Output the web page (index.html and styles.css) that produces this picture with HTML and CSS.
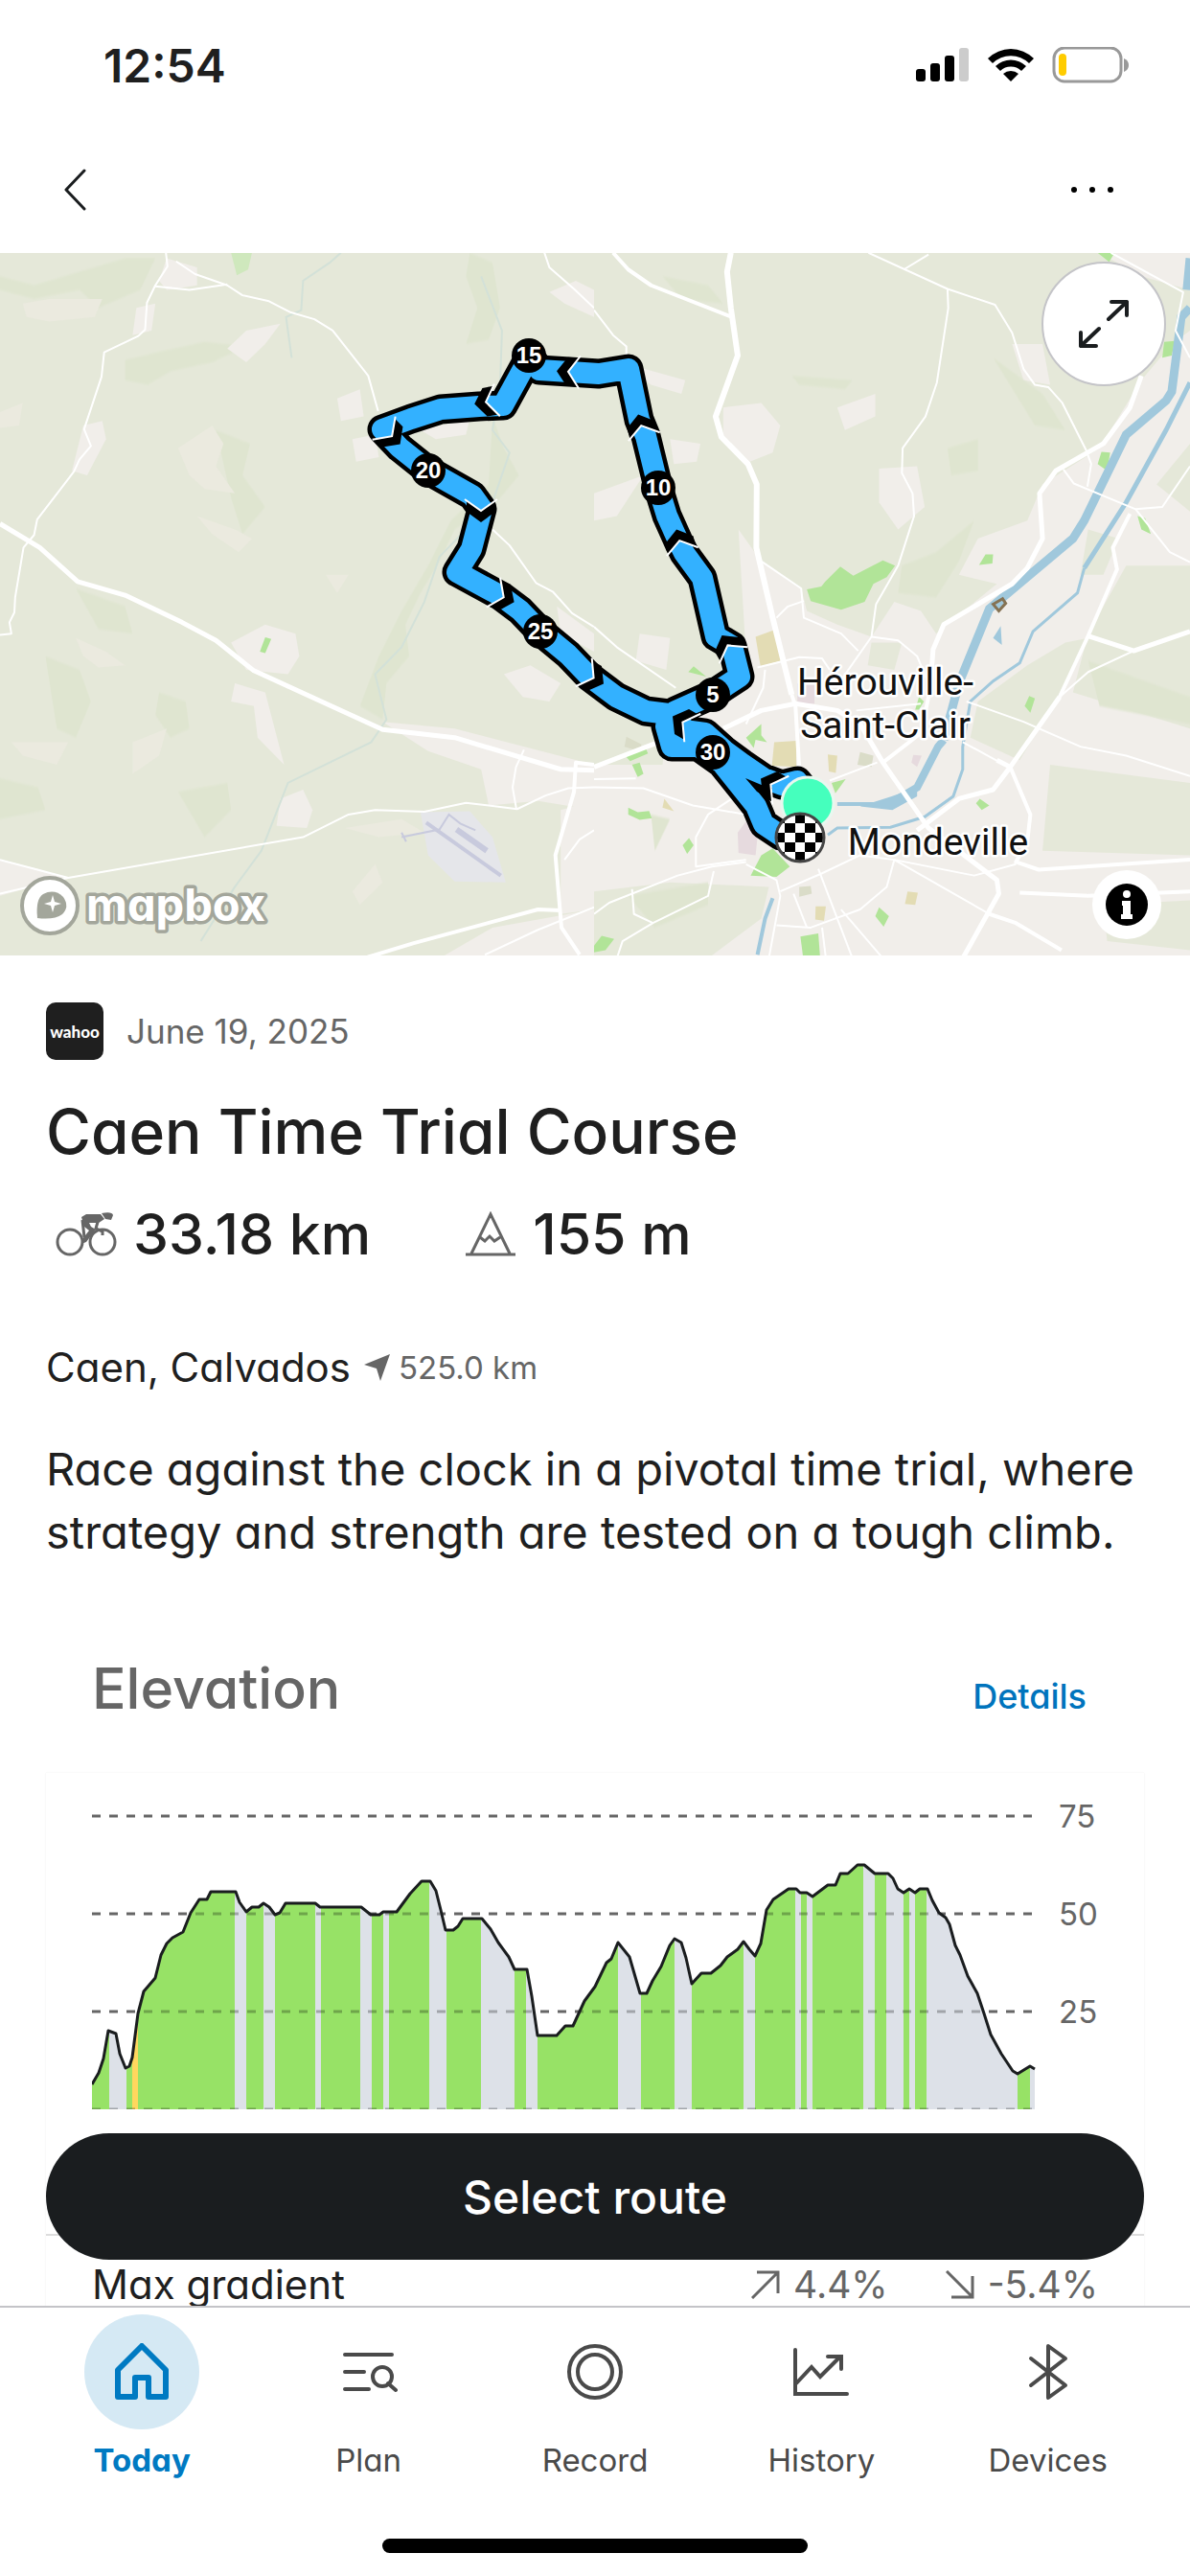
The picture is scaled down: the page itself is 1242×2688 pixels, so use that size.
FILE: index.html
```html
<!DOCTYPE html>
<html lang="en">
  <head>
    <meta charset="UTF-8" />
    <meta name="viewport" content="width=device-width, initial-scale=1.0" />
    <title>Caen Time Trial Course</title>
    <link rel="stylesheet" href="styles.css">
  </head>
  <body>
    <div class="app">
      <div class="statusBar">
        <span class="time">12:54</span>
        <svg class="statusIcons" viewBox="0 0 222 38" width="222" height="38" aria-hidden="true">
          <rect x="0" y="23" width="10" height="13" rx="3" />
          <rect x="15" y="17" width="10" height="19" rx="3" />
          <rect x="30" y="9" width="10" height="27" rx="3" />
          <rect x="45" y="1" width="10" height="35" rx="3" fill="#ccc" />
          <path d="M75 12 A34 34 0 0 1 123 12 L118 17 A27 27 0 0 0 80 17Z" />
          <path d="M83 20 A23 23 0 0 1 115 20 L110 25 A16 16 0 0 0 88 25Z" />
          <path d="M91 28 A12 12 0 0 1 107 28 L99 36Z" />
          <rect x="144" y="1" width="70" height="35" rx="11" fill="none" stroke="#999" stroke-width="3" />
          <rect x="149" y="7" width="8" height="23" rx="4" fill="#fc0" />
          <path d="M217 12 Q222 14 222 19 Q222 24 217 26Z" fill="#999" />
        </svg>
      </div>

      <div class="navBar">
        <button class="iconBtn" aria-label="Back">
          <svg viewBox="0 0 24 44" width="24" height="44"><path d="M21 2 L2 22 L21 42" fill="none" stroke="#1a1d1f" stroke-width="3" stroke-linecap="round" stroke-linejoin="round" /></svg>
        </button>
        <button class="iconBtn" aria-label="More">
          <svg viewBox="0 0 46 8" width="46" height="8"><circle cx="4" cy="4" r="3" /><circle cx="23" cy="4" r="3" /><circle cx="42" cy="4" r="3" /></svg>
        </button>
      </div>

      <div class="content">
        <div class="map">
          <svg class="mapArt" viewBox="0 0 1242 733" role="img" aria-label="Route map">
            <defs>
              <g id="arrow">
                <path d="M-15 8 V-4 L0 -15 L15 -4 V8 L0 -3Z" fill="#000" />
                <path d="M-17 9 L0 -3 L17 9" fill="none" stroke="#fff" stroke-width="2" />
              </g>
              <path id="track" d="M844 830 L832 815 L816 819 L797 812 L775 797 L756 783 L736 765 L714 762 L705 742 L743 725 L772 706 L764 674 L747 664 L733 603 L714 577 L709 567 L696 538 L688 512 L674 455 L667 438 L656 385 L625 390 L563 386 L553 372 L525 423 L500 424 L460 427 L429 437 L399 448 L417 467 L447 491 L493 517 L503 531 L492 573 L477 597 L523 622 L543 637 L564 659 L593 683 L615 706 L643 727 L674 742 L698 745 L695 758 L701 779 L729 779 L753 796 L789 841 L797 860 L815 872 L834 874" />
              <clipPath id="finishClip"><circle cx="835" cy="610" r="24" /></clipPath>
              <filter id="soft"><feGaussianBlur stdDeviation="2" /></filter>
            </defs>
            <rect width="1242" height="733" fill="#e5e8d9" />

            <!-- west side -->
            <svg x="0" y="-4" width="620" height="740" viewBox="0 0 1568 1568" preserveAspectRatio="none">
              <g fill="#dfe5d0" filter="url(#soft)">
                <path d="M0 60 L90 80 L210 50 L330 20 L410 20 L370 90 L260 130 L210 90 L90 110 L0 90Z" />
                <path d="M330 245 L430 225 L540 205 L650 215 L560 250 L450 270 L390 300 L330 290Z" />
                <path d="M1240 8 L1300 30 L1320 130 L1290 200 L1230 210 L1260 130 L1230 60Z" />
                <path d="M1300 370 L1330 440 L1370 500 L1310 560 L1200 620 L1160 690 L1110 760 L1070 830 L1080 900 L1020 960 L1010 1040 L950 1010 L1000 900 L1060 800 L1130 700 L1190 600 L1290 520Z" />
                <path d="M570 400 L660 430 L640 500 L700 570 L640 630 L610 550Z" />
                <path d="M120 900 L210 930 L240 1000 L200 1080 L150 1060Z" />
                <path d="M420 980 L490 1000 L500 1060 L450 1080 L410 1030Z" />
                <path d="M0 1170 L100 1190 L120 1240 L0 1260Z" />
                <path d="M470 1200 L600 1180 L610 1240 L540 1300Z" />
                <path d="M200 750 L330 790 L350 850 L260 840Z" />
              </g>
              <g fill="#ebeadf">
                <path d="M60 120 L130 110 L270 110 L250 150 L130 160 L70 150Z" />
                <path d="M470 440 L560 390 L590 430 L570 480 L620 540 L540 530 L500 500Z" />
                <path d="M520 590 L620 620 L665 640 L630 670 L560 630Z" />
                <path d="M0 360 L60 340 L50 390 L0 395Z" />
                <path d="M200 860 L280 890 L330 920 L260 925 L220 900Z" />
                <path d="M30 1090 L180 1090 L150 1140 L60 1120Z" />
                <path d="M350 1090 L440 1060 L420 1120 L350 1160Z" />
                <path d="M860 720 L920 720 L890 760Z" />
                <path d="M910 1280 L1060 1260 L1120 1290 L1000 1300Z" />
                <path d="M930 1420 L990 1360 L1010 1400 L950 1450Z" />
              </g>
              <g fill="#f1eeea">
                <path d="M440 20 L520 40 L520 80 L440 90 L420 70Z" />
                <path d="M360 130 L410 120 L400 180 L350 190Z" />
                <path d="M600 220 L650 180 L740 165 L700 210 L650 250Z" />
                <path d="M220 390 L270 380 L280 420 L230 500 L190 490Z" />
                <path d="M1450 95 L1520 70 L1568 90 V150 L1490 120Z" />
                <path d="M890 330 L950 310 L960 370 L900 380Z" />
                <path d="M930 420 L990 410 L1000 460 L940 470Z" />
                <path d="M1110 400 L1240 375 L1230 410 L1150 420Z" />
                <path d="M610 870 L700 830 L780 850 L790 900 L760 940 L650 930Z" />
                <path d="M620 960 L700 980 L750 1140 L680 1080 L670 1010 L610 1000Z" />
                <path d="M1470 790 L1568 850 V890 L1480 850Z" />
                <path d="M1330 940 L1400 920 L1480 960 L1450 1000 L1380 990Z" />
                <path d="M1010 1045 L1200 1060 L1568 1140 V1240 L1420 1220 L1290 1230 L1270 1150 L1130 1110Z" />
                <path d="M740 1215 L800 1195 L825 1240 L810 1280 L730 1275Z" />
                <path d="M0 1350 L100 1370 L170 1390 L0 1430Z" />
                <path d="M1160 1568 L1300 1500 L1568 1460 V1568Z" />
                <path d="M1480 1240 L1568 1220 V1460 L1480 1470Z" />
              </g>
              <path d="M610 8 H665 L655 45 L625 58Z" fill="#cfe8bd" />
              <path d="M700 858 L716 862 L700 893 L686 890Z" fill="#b1e498" />
              <g fill="none" stroke="#d3e1d8" stroke-width="2">
                <path vector-effect="non-scaling-stroke" d="M900 8 L870 30 L800 70 L795 135 L755 150 L770 240" />
                <path vector-effect="non-scaling-stroke" d="M1270 60 L1325 180 L1320 300 L1300 400 L1345 450 L1300 560 L1160 680 L1120 780 L1060 880 L990 940 L1020 1040 L980 1090 L760 1180 L690 1330 L620 1410 L530 1530" />
              </g>
              <path d="M1110 1245 L1240 1243 L1300 1300 L1335 1400 L1200 1398 L1130 1340Z" fill="#e5e6ea" />
              <g fill="none" stroke="#c8cadd" stroke-width="4">
                <path vector-effect="non-scaling-stroke" d="M1125 1268 L1322 1385" />
                <path vector-effect="non-scaling-stroke" d="M1205 1283 L1285 1330" stroke-width="6" />
                <path vector-effect="non-scaling-stroke" d="M1060 1300 L1160 1283 L1185 1250 L1215 1270 L1255 1285 M1060 1290 L1072 1310" stroke-width="2" />
              </g>
              <g fill="none" stroke="#fff" stroke-width="2" stroke-linejoin="round">
                <path vector-effect="non-scaling-stroke" d="M438 8 L442 38 L410 80 L388 118 L383 178 L365 192 L275 228 L268 282 L222 398 L240 435 L210 465 L195 492 L98 598 L90 632 L62 660 L40 770 L38 803 L25 825 L30 850 L0 853" />
                <path vector-effect="non-scaling-stroke" d="M465 27 L515 55 L600 80 L640 102 L710 115 L768 140 L830 155 L878 180 L972 280 L998 358" />
                <path vector-effect="non-scaling-stroke" d="M410 82 L500 90 L600 78" />
                <path vector-effect="non-scaling-stroke" d="M1437 8 L1450 40 L1515 88 L1568 130" />
                <path vector-effect="non-scaling-stroke" d="M1300 620 L1345 655 L1415 738 L1460 758 L1510 805 L1568 835" />
                <path vector-effect="non-scaling-stroke" d="M0 1350 L180 1390 L800 1300 L920 1250 L990 1240 L1120 1244 L1230 1224 L1365 1238 L1440 1208 L1500 1192 L1568 1190" />
                <path vector-effect="non-scaling-stroke" d="M1383 1107 L1362 1145 L1353 1190 L1363 1238" />
                <path vector-effect="non-scaling-stroke" d="M0 1425 L180 1390" />
                <path vector-effect="non-scaling-stroke" d="M1280 1560 L1420 1505 L1568 1455" />
                <path vector-effect="non-scaling-stroke" d="M1490 1350 L1530 1305 L1568 1285" />
                <path vector-effect="non-scaling-stroke" stroke-width="5" d="M0 607 L105 660 L205 735 L330 765 L480 825 L570 865 L670 932 L1010 1062 L1200 1080 L1480 1150 L1568 1152" />
                <path vector-effect="non-scaling-stroke" stroke-width="4" d="M960 1568 L1090 1535 L1420 1460 L1480 1462 M1568 1140 L1520 1135 L1515 1200 L1466 1340 L1482 1500 L1530 1560" />
              </g>
            </svg>

            <!-- east side -->
            <svg x="620" y="-4" width="622" height="740" viewBox="0 0 1568 1568" preserveAspectRatio="none">
              <path fill="#f1eeea" d="M380 620 L440 690 L545 750 L560 800 L640 830 L730 857 L790 780 L860 800 L900 850 L1060 740 L960 720 L1010 640 L1140 600 L1180 520 L1330 440 L1440 290 L1520 210 L1568 180 V430 L1480 520 L1568 580 V700 L1400 700 L1300 850 L1260 980 L1568 1060 V1568 H0 V1140 L180 1140 L200 1010 L330 960 L400 900Z" />
              <g fill="#f1eeea">
                <path d="M340 350 L440 340 L490 390 L470 450 L410 470 L340 410Z" />
                <path d="M200 420 L280 430 L270 470 L210 475Z" />
                <path d="M640 350 L740 320 L740 370 L660 400Z" />
                <path d="M750 485 L850 480 L870 570 L800 620 L750 560Z" />
                <path d="M0 540 L130 500 L60 590 L0 600Z" />
                <path d="M70 250 L240 290 L230 320 L150 300Z" />
                <path d="M1330 8 H1568 V90 L1440 60Z" />
                <path d="M1100 210 L1180 210 L1200 300 L1130 290Z" />
                <path d="M120 850 L200 860 L190 930 L110 910Z" />
              </g>
              <g fill="#e5e8d9">
                <path d="M1300 620 L1380 640 L1340 720 L1280 720Z" />
                <path d="M1240 870 L1300 860 L1220 990 L1120 1130 L990 1080 L1010 1000 L1140 920Z" />
                <path d="M1200 1140 L1568 1180 V1340 L1180 1330Z" />
                <path d="M1340 1450 L1568 1440 V1550 L1350 1530Z" />
                <path d="M0 1420 L200 1400 L460 1410 L440 1480 L300 1568 H0Z" />
                <path d="M730 870 L810 870 L790 930 L720 920Z" />
              </g>
              <g fill="#dfe5d0" filter="url(#soft)">
                <path d="M810 700 L900 670 L1000 600 L960 690 L900 770 L800 760Z" />
                <path d="M930 440 L1010 420 L1010 490 L940 500Z" />
                <path d="M180 60 L300 80 L340 120 L230 110Z" />
                <path d="M520 280 L680 290 L660 310 L540 300Z" />
                <path d="M1050 240 L1180 320 L1240 400 L1160 390Z" />
                <path d="M1300 910 L1500 970 L1568 990 V1050 L1330 1010Z" />
                <path d="M150 1250 L200 1260 L160 1330Z" />
                <path d="M90 1430 L300 1400 L300 1450 L160 1500Z" />
              </g>
              <g fill="#b1e498">
                <path d="M560 752 L598 746 L608 735 L648 702 L682 722 L760 688 L792 700 L770 725 L735 740 L712 780 L650 797 L570 778Z" />
                <path d="M1013 698 L1030 675 L1050 675 L1048 695Z" />
                <path d="M1325 475 L1335 448 L1358 450 L1350 490Z" />
                <path d="M1325 8 H1370 L1355 28Z" />
                <path d="M1500 205 L1528 203 L1520 235 L1495 240Z" />
                <path d="M1430 590 L1450 595 L1465 630 L1440 620Z" />
                <path d="M248 935 L262 922 L295 945Z" />
                <path d="M400 1080 L440 1050 L440 1075 L455 1090 L425 1085 L420 1103Z" />
                <path d="M80 1118 L135 1102 L142 1115 L95 1132Z M100 1140 L120 1135 L130 1160 L115 1167Z" />
                <path d="M90 1235 L115 1245 L145 1242 L152 1258 L120 1262 L90 1250Z" />
                <path d="M233 1318 L250 1302 L262 1318 L245 1337Z" />
                <path d="M412 1385 L440 1340 L470 1325 L515 1365 L480 1388Z" />
                <path d="M543 1520 L590 1513 L595 1568 L550 1565Z" />
                <path d="M740 1475 L750 1455 L776 1475 L762 1498Z" />
                <path d="M1005 1225 L1015 1215 L1040 1230 L1020 1240Z" />
                <path d="M1133 1010 L1145 988 L1160 993 L1148 1025Z" />
                <path d="M845 1018 L855 990 L868 1000 L855 1018Z" />
                <path d="M625 1180 L662 1172 L635 1203Z" />
                <path d="M0 1540 L20 1518 L53 1525 L30 1550 L0 1555Z" />
              </g>
              <g fill="#e3dcb4">
                <path d="M425 857 L480 840 L492 910 L438 922Z" />
                <path d="M474 1090 L532 1087 L532 1145 L468 1142Z" />
                <path d="M615 1117 L640 1120 L636 1158 L618 1155Z" />
                <path d="M825 1420 L852 1423 L845 1450 L818 1448Z" />
                <path d="M583 1453 L610 1453 L605 1485 L582 1482Z" />
                <path d="M185 1215 L210 1243 L180 1235Z" />
              </g>
              <g fill="#dadcc8">
                <path d="M700 1112 L735 1120 L730 1145 L693 1140Z" />
                <path d="M540 1410 L570 1408 L573 1425 L540 1432Z" />
                <path d="M85 1078 L125 1095 L120 1110 L80 1100Z" />
              </g>
              <g fill="#e6dade">
                <path d="M378 1290 L400 1265 L430 1300 L425 1340 L380 1335Z" />
                <path d="M535 960 H580 V1005 H535Z" />
                <path d="M840 1118 L862 1120 L850 1145 L835 1135Z" />
              </g>
              <g fill="none" stroke="#a0c8dc">
                <path vector-effect="non-scaling-stroke" stroke-width="9" d="M1568 20 L1560 90 M1568 130 L1545 150 L1520 315 L1505 335 L1400 410 L1290 600 L1260 640 L1040 795 L960 960 L920 1085" />
                <path vector-effect="non-scaling-stroke" stroke-width="8" d="M920 1085 L905 1100 L850 1190 L820 1205 L780 1225" />
                <path vector-effect="non-scaling-stroke" stroke-width="4" d="M790 1227 L640 1227 M470 1435 L450 1480 L430 1560" />
                <path vector-effect="non-scaling-stroke" stroke-width="5" d="M1568 295 L1505 400 L1400 560 L1290 705" />
                <path vector-effect="non-scaling-stroke" stroke-width="3" d="M1290 705 L1272 760 L1155 845 L1120 915 L1050 955 L990 1000 L970 1100 L970 1150 L945 1210 L870 1255 L780 1278 L640 1280 L615 1295" />
              </g>
              <path d="M783 1210 L850 1190 L850 1210 L785 1240 L700 1232Z M1050 860 L1070 833 L1073 875Z" fill="#a0c8dc" />
              <g fill="none" stroke="#fff" stroke-width="2" stroke-linejoin="round">
                <path vector-effect="non-scaling-stroke" d="M722 8 L930 88 L1055 123 L1100 185 L1130 265 L1160 300 L1195 305 L1232 340 L1295 445 L1308 475 L1298 525" />
                <path vector-effect="non-scaling-stroke" d="M930 88 L932 130 L902 295 L872 370 L812 440 L810 495 L838 540 L842 590 L800 700 L742 785 L730 857 L640 965" />
                <path vector-effect="non-scaling-stroke" d="M815 45 L880 12 M1360 8 L1550 95 L1530 180 L1568 240" />
                <path vector-effect="non-scaling-stroke" d="M0 135 L50 190 L85 215 V240" />
                <path vector-effect="non-scaling-stroke" d="M0 835 L60 880 L215 970" />
                <path vector-effect="non-scaling-stroke" d="M440 690 L545 750 L552 815 L650 850 L695 888" />
                <path vector-effect="non-scaling-stroke" d="M480 815 L510 790 L552 778" />
                <path vector-effect="non-scaling-stroke" d="M730 857 L800 865 L850 900 L875 950" />
                <path vector-effect="non-scaling-stroke" d="M430 925 L540 902 L600 905 L620 930 M450 930 L445 970 L400 1050" />
                <path vector-effect="non-scaling-stroke" d="M1235 487 L1262 518 L1425 575 L1495 570 L1568 480 M1425 575 L1515 670 L1568 692" />
                <path vector-effect="non-scaling-stroke" d="M1225 990 L1300 935 L1420 888 M980 1000 L1130 1045 L1280 1100 L1400 1120 L1568 1165" />
                <path vector-effect="non-scaling-stroke" d="M970 1090 L1080 1140 M690 1020 L860 1005 M620 1175 L745 1135" />
                <path vector-effect="non-scaling-stroke" d="M0 1190 L130 1192 L260 1230 L400 1250 M0 1172 L110 1170" />
                <path vector-effect="non-scaling-stroke" d="M380 1205 L300 1250 L268 1300 L268 1365 L400 1350" />
                <path vector-effect="non-scaling-stroke" d="M0 1470 L40 1445 L220 1385 L310 1365 L400 1355 M100 1415 L105 1470 L155 1490 L300 1430 L315 1375" />
                <path vector-effect="non-scaling-stroke" d="M60 1568 L75 1530 L155 1490" />
                <path vector-effect="non-scaling-stroke" d="M490 1420 L600 1380 L700 1340 L790 1350 L1000 1385 L1110 1360" />
                <path vector-effect="non-scaling-stroke" d="M480 1495 L570 1500 L700 1460 L770 1410 L790 1350" />
                <path vector-effect="non-scaling-stroke" d="M400 1360 L480 1395 L490 1430 L460 1568 M590 1370 L680 1568 M525 1425 L560 1500 M600 1500 L610 1568 M650 1460 L760 1568" />
                <path vector-effect="non-scaling-stroke" d="M790 1350 L1040 1470" />
                <path vector-effect="non-scaling-stroke" stroke-width="6" d="M360 8 L350 50 L360 130 L378 235 L320 370 L335 415 L405 475 L428 520 L427 660 L470 815 L520 985" />
                <path vector-effect="non-scaling-stroke" stroke-width="4" d="M520 985 L530 1010 L540 1150" />
                <path vector-effect="non-scaling-stroke" stroke-width="4" d="M50 8 L90 45 L150 80 L368 152" />
                <path vector-effect="non-scaling-stroke" stroke-width="5" d="M1440 280 L1410 350 L1340 430 L1215 490 L1172 540 L1180 640 L1140 705 L1100 740 L920 830 L892 885 L885 970" />
                <path vector-effect="non-scaling-stroke" stroke-width="4" d="M1410 585 L1365 660 L1376 708 L1300 855 L1225 990" />
                <path vector-effect="non-scaling-stroke" stroke-width="5" d="M1225 990 L1095 1145 L1050 1195 L960 1215 L850 1285 M1300 855 L1420 888 L1568 845 M1095 1145 L1060 1130" />
                <path vector-effect="non-scaling-stroke" stroke-width="5" d="M0 1145 L170 1090 M340 1060 L440 1020 L530 1005 L640 1020 L700 1050 L760 1135 L880 1280 L1060 1395 L1065 1425 L970 1568" />
                <path vector-effect="non-scaling-stroke" stroke-width="4" d="M1095 1145 L1148 1250 L1140 1310 L1110 1355 L1170 1372 L1568 1350 M1120 1423 L1300 1430 L1568 1420 M1040 1470 L1110 1490 L1230 1550 M760 1135 L860 1070 L885 970" />
              </g>
              <path vector-effect="non-scaling-stroke" d="M1050 785 L1075 773 L1083 783 L1065 800Z" fill="#a0c8dc" stroke="#857253" stroke-width="3" />
            </svg>

            <!-- place names -->
            <g class="places">
              <text x="924" y="461" text-anchor="middle">Hérouville-</text>
              <text x="924" y="506" text-anchor="middle">Saint-Clair</text>
              <text x="979" y="628" text-anchor="middle">Mondeville</text>
            </g>

            <!-- route, 264 is the top of the map -->
            <g transform="translate(0 -264)">
              <g fill="none" stroke-linejoin="round" stroke-linecap="round">
                <use href="#track" stroke="#000" stroke-width="31" />
                <use href="#track" stroke="#33b1ff" stroke-width="22" />
              </g>
              <path d="M778 812 L797 820 L806 822 L804 834 L790 826Z" />
              <use href="#arrow" transform="translate(596 388) rotate(273)" />
              <use href="#arrow" transform="translate(510 419) rotate(260)" />
              <use href="#arrow" transform="translate(407 453) rotate(135)" />
              <use href="#arrow" transform="translate(502 530) rotate(180)" />
              <use href="#arrow" transform="translate(523 622) rotate(115)" />
              <use href="#arrow" transform="translate(617 706) rotate(120)" />
              <use href="#arrow" transform="translate(670 447) rotate(-15)" />
              <use href="#arrow" transform="translate(710 567) rotate(-15)" />
              <use href="#arrow" transform="translate(761 676) rotate(-30)" />
              <use href="#arrow" transform="translate(715 755) rotate(-60)" />
              <use href="#arrow" transform="translate(807 820) rotate(-60)" />
              <g class="kmMarks">
                <circle cx="744" cy="725" r="18" /><text x="744" y="733">5</text>
                <circle cx="687" cy="509" r="18" /><text x="687" y="517">10</text>
                <circle cx="552" cy="371" r="18" /><text x="552" y="379">15</text>
                <circle cx="447" cy="491" r="18" /><text x="447" y="499">20</text>
                <circle cx="564" cy="659" r="18" /><text x="564" y="667">25</text>
                <circle cx="744" cy="785" r="18" /><text x="744" y="793">30</text>
              </g>
              <circle cx="843" cy="838" r="27" fill="#45ffbd" stroke="#e9f7ef" stroke-width="3" />
            </g>
            <circle cx="835" cy="610" r="25" fill="#fff" />
            <g clip-path="url(#finishClip)">
              <path d="M830 585h10v10h-10zM819 595h11v10h-11zM840 595h11v10h-11zM809 605h10v10h-10zM830 605h10v10h-10zM851 605h10v10h-10zM819 615h11v10h-11zM840 615h11v10h-11zM830 625h10v10h-10zM809 585h10v10h-10zM851 585h10v10h-10zM809 625h10v10h-10zM851 625h10v10h-10z" />
            </g>
            <circle cx="835" cy="610" r="25" fill="none" stroke="#444" stroke-width="3" />

            <!-- attribution logo -->
            <circle cx="52" cy="681" r="29" fill="#fff" stroke="#a3a69b" stroke-width="4" />
            <path d="M39 694 Q37 674 45 669 Q57 663 66 672 Q73 682 65 690 Q57 696 39 694Z" fill="#a3a69b" />
            <path d="M55 670 L57 677 L64 679 L57 681 L55 688 L53 681 L46 679 L53 677Z" fill="#fff" />
            <text class="mapLogo" x="90" y="697">mapbox</text>
          </svg>
          <button class="mapBtn expandBtn" aria-label="Expand map">
            <svg viewBox="0 0 52 52" width="52" height="52"><path d="M31 21 L50 3 M34 3 H50 V17 M21 31 L2 49 M2 35 V49 H18" fill="none" stroke="#1a1d1f" stroke-width="4" stroke-linecap="round" stroke-linejoin="round" /></svg>
          </button>
          <button class="mapBtn infoBtn" aria-label="Map information">
            <svg viewBox="0 0 44 44" width="44" height="44"><circle cx="22" cy="22" r="22" /><circle cx="22" cy="11" r="4" fill="#fff" /><path d="M17 18 H26 V32 H28 V37 H16 V32 H18 V23 H17Z" fill="#fff" /></svg>
          </button>
        </div>

        <div class="details">
          <div class="meta">
            <span class="brand">wahoo</span>
            <span>June 19, 2025</span>
          </div>
          <h1>Caen Time Trial Course</h1>
          <div class="stats">
            <div class="stat">
              <svg viewBox="0 0 64 46" width="64" height="46" aria-hidden="true">
                <g fill="none" stroke="#666" stroke-width="3"><circle cx="15" cy="31" r="13" /><circle cx="49" cy="31" r="13" /><path d="M28 8 L30 26 M44 10 L42 17 L49 20 V24" /></g>
                <path d="M27 5 L32 2 H47 L51 7 L45 11 L35 11 L37 15 L42 18 L32 31 L27 33 L28 28 L35 19 L30 15Z" fill="#666" />
                <path d="M48 1 Q59 -1 60 3 L58 8 L52 7Z" fill="#666" />
              </svg>
              33.18 km
            </div>
            <div class="stat">
              <svg viewBox="0 0 54 48" width="54" height="48" aria-hidden="true"><path d="M1 45 H53 M7 44 L27 3 L47 44 M16 27 L21 31 L26 26 L31 31 L37 27" fill="none" stroke="#666" stroke-width="3" /></svg>
              155 m
            </div>
          </div>
          <div class="location">
            <span>Caen, Calvados</span>
            <svg viewBox="0 0 28 28" width="28" height="28" aria-hidden="true"><path d="M27 0 L0 11 L13 15 L17 28Z" fill="#666" /></svg>
            <span class="away">525.0 km</span>
          </div>
          <p class="description">Race against the clock in a pivotal time trial, where strategy and strength are tested on a tough climb.</p>

          <div class="elevationHead">
            <h2>Elevation</h2>
            <a href="#elevation">Details</a>
          </div>
          <div class="card" id="elevation">
            <svg class="chart" viewBox="0 0 1050 322" role="img" aria-label="Elevation profile">
              <defs>
                <clipPath id="profileClip">
                  <path d="M0 321 V295 L7 283 L12 268 L17 239 L25 242 L29 263 L35 278 L39 276 L42 267 L48 221 L54 198 L66 184 L72 160 L78 148 L84 142 L95 136 L103 116 L112 102 H120 L124 94 H150 L154 105 L161 115 L167 110 H174 L179 106 L185 110 L191 118 L196 116 L202 106 H233 L238 110 H281 L291 118 H300 L304 115 H318 L332 96 L344 83 H353 L359 93 L364 113 L369 134 H377 L382 130 L387 122 H407 L416 133 L424 147 L435 162 L441 175 H454 L459 203 L465 244 H485 L494 234 H502 L514 208 L525 193 L537 168 L542 164 L549 147 L561 162 L572 200 H579 L585 187 L594 172 L603 150 L608 143 L615 147 L620 163 L626 190 L636 179 H646 L656 171 L663 162 L674 154 L680 146 L686 154 L692 161 L698 148 L704 113 L711 102 L727 91 H735 L739 95 H746 L752 99 L768 87 H776 L781 75 H789 L799 66 H806 L817 75 H831 L836 80 L841 91 L847 95 L853 91 L859 95 L864 91 H872 L877 103 L884 116 L891 121 L895 128 L901 150 L906 160 L914 182 L924 200 L931 221 L938 243 L949 263 L961 281 L966 284 L979 276 L984 279 V321Z" />
                </clipPath>
              </defs>
              <g class="gridLines">
                <path d="M0 15 H984 M0 117 H984 M0 219 H984" />
              </g>
              <g clip-path="url(#profileClip)">
                <rect width="984" height="322" fill="#97e266" />
                <rect x="42" width="6" height="322" fill="#ffd75e" />
                <path fill="#dde1e8" d="M18 0h18v322h-18zM149 0h12v322h-12zM179 0h12v322h-12zM233 0h6v322h-6zM280 0h12v322h-12zM304 0h6v322h-6zM352 0h18v322h-18zM406 0h35v322h-35zM453 0h12v322h-12zM549 0h24v322h-24zM608 0h18v322h-18zM680 0h12v322h-12zM734 0h6v322h-6zM746 0h6v322h-6zM805 0h12v322h-12zM829 0h18v322h-18zM853 0h6v322h-6zM871 0h95v322h-95zM979 0h5v322h-5z" />
                <g class="gridLines shaded">
                  <path d="M0 117 H984 M0 219 H984 M0 321 H984" />
                </g>
              </g>
              <path class="profile" d="M0 295 L7 283 L12 268 L17 239 L25 242 L29 263 L35 278 L39 276 L42 267 L48 221 L54 198 L66 184 L72 160 L78 148 L84 142 L95 136 L103 116 L112 102 H120 L124 94 H150 L154 105 L161 115 L167 110 H174 L179 106 L185 110 L191 118 L196 116 L202 106 H233 L238 110 H281 L291 118 H300 L304 115 H318 L332 96 L344 83 H353 L359 93 L364 113 L369 134 H377 L382 130 L387 122 H407 L416 133 L424 147 L435 162 L441 175 H454 L459 203 L465 244 H485 L494 234 H502 L514 208 L525 193 L537 168 L542 164 L549 147 L561 162 L572 200 H579 L585 187 L594 172 L603 150 L608 143 L615 147 L620 163 L626 190 L636 179 H646 L656 171 L663 162 L674 154 L680 146 L686 154 L692 161 L698 148 L704 113 L711 102 L727 91 H735 L739 95 H746 L752 99 L768 87 H776 L781 75 H789 L799 66 H806 L817 75 H831 L836 80 L841 91 L847 95 L853 91 L859 95 L864 91 H872 L877 103 L884 116 L891 121 L895 128 L901 150 L906 160 L914 182 L924 200 L931 221 L938 243 L949 263 L961 281 L966 284 L979 276 L984 279" />
              <g class="axis">
                <text x="1009" y="27">75</text>
                <text x="1009" y="129">50</text>
                <text x="1009" y="231">25</text>
              </g>
            </svg>
            <div class="gradientRow">
              <span class="label">Max gradient</span>
              <span class="value">
                <svg viewBox="0 0 30 30" width="30" height="30" aria-hidden="true"><path d="M1 29 L28 2 M6 2 H28 V24" fill="none" stroke="#666" stroke-width="3" /></svg>
                4.4%
              </span>
              <span class="value">
                <svg viewBox="0 0 30 30" width="30" height="30" aria-hidden="true"><path d="M1 1 L28 28 M6 28 H28 V6" fill="none" stroke="#666" stroke-width="3" /></svg>
                -5.4%
              </span>
            </div>
          </div>
        </div>
        <button class="selectBtn">Select route</button>
      </div>

      <nav class="tabBar">
        <a class="tab active" href="#today">
          <span class="tabIcon"><svg viewBox="0 0 60 60" width="60" height="60"><path d="M30 3 L55 28 V56 H37 V36 H23 V56 H5 V28Z" fill="none" stroke="currentColor" stroke-width="6" stroke-linejoin="round" /></svg></span>
          Today
        </a>
        <a class="tab" href="#plan">
          <span class="tabIcon"><svg viewBox="0 0 60 60" width="60" height="60"><path d="M5 12 H54 M5 30 H25 M5 48 H30 M50 42 L58 49" fill="none" stroke="currentColor" stroke-width="4" stroke-linecap="round" /><circle cx="44" cy="35" r="10" fill="none" stroke="currentColor" stroke-width="4" /></svg></span>
          Plan
        </a>
        <a class="tab" href="#record">
          <span class="tabIcon"><svg viewBox="0 0 60 60" width="60" height="60"><circle cx="30" cy="30" r="27" fill="none" stroke="currentColor" stroke-width="4" /><circle cx="30" cy="30" r="18" fill="none" stroke="currentColor" stroke-width="4" /></svg></span>
          Record
        </a>
        <a class="tab" href="#history">
          <span class="tabIcon"><svg viewBox="0 0 60 60" width="60" height="60"><path d="M3 7 V53 H57 M4 42 L20 25 L29 35 L50 14 M37 14 H51 V27" fill="none" stroke="currentColor" stroke-width="4" stroke-linecap="round" /></svg></span>
          History
        </a>
        <a class="tab" href="#devices">
          <span class="tabIcon"><svg viewBox="0 0 60 60" width="60" height="60"><path d="M12 16 L48 44 L30 57 V3 L48 16 L12 44" fill="none" stroke="currentColor" stroke-width="4" stroke-linecap="round" stroke-linejoin="round" /></svg></span>
          Devices
        </a>
      </nav>
      <div class="homeBar"><span></span></div>
    </div>
  </body>
</html>
```
FILE: styles.css
```css
* {
  box-sizing: border-box;
}
body {
  margin: 0;
  background: #fff;
  color: #1f1f1f;
  font-family: Inter, "Liberation Sans", sans-serif;
  font-feature-settings: "cv11";
}
button {
  border: none;
  background: none;
  padding: 0;
  font: inherit;
  font-feature-settings: inherit;
}
.app {
  display: flex;
  flex-direction: column;
  height: 100vh;
}
.statusBar {
  display: flex;
  justify-content: space-between;
  align-items: center;
  height: 136px;
  padding: 0 64px 0 108px;
  flex-shrink: 0;
}
.time {
  font-size: 48px;
  font-weight: 600;
}
.navBar {
  display: flex;
  justify-content: space-between;
  align-items: center;
  height: 128px;
  padding: 0 79px 4px 67px;
  flex-shrink: 0;
}
.iconBtn {
  display: flex;
  align-items: center;
  height: 64px;
}

.content {
  position: relative;
  flex: 1;
  min-height: 0;
  overflow: hidden;
}
.map {
  position: relative;
}
.mapArt {
  display: block;
  width: 100%;
}
.places text {
  font-family: Roboto, sans-serif;
  font-size: 39px;
  fill: #111;
  stroke: #fff;
  stroke-width: 5px;
  stroke-linejoin: round;
  paint-order: stroke;
}
.kmMarks text {
  font-family: "Liberation Sans", sans-serif;
  font-size: 24px;
  font-weight: bold;
  fill: #fff;
  text-anchor: middle;
}
.mapLogo {
  font-size: 47px;
  font-weight: 700;
  fill: #fff;
  stroke: #a3a69b;
  stroke-width: 7px;
  stroke-linejoin: round;
  paint-order: stroke;
}
.mapBtn {
  position: absolute;
  display: flex;
  justify-content: center;
  align-items: center;
  border-radius: 50%;
  background: #fff;
}
.expandBtn {
  top: 9px;
  right: 25px;
  width: 130px;
  height: 130px;
  border: 2px solid #c4c4c8;
}
.infoBtn {
  right: 30px;
  bottom: 17px;
  width: 72px;
  height: 72px;
}

.details {
  padding: 49px 48px 0;
}
.meta {
  display: flex;
  align-items: center;
  gap: 24px;
  color: #666;
  font-size: 35px;
}
.brand {
  display: flex;
  justify-content: center;
  align-items: center;
  width: 60px;
  height: 60px;
  border-radius: 10px;
  background: #1f1f1f;
  color: #fff;
  font-family: Lato, sans-serif;
  font-size: 17px;
  font-weight: 900;
}
h1 {
  margin: 35px 0 0;
  font-size: 64px;
  line-height: 80px;
  font-weight: 500;
}
.stats {
  display: flex;
  gap: 98px;
  margin-top: 31px;
  padding-left: 10px;
}
.stat {
  display: flex;
  align-items: center;
  gap: 17px;
  font-size: 59px;
  line-height: 72px;
  font-weight: 500;
}
.location {
  display: flex;
  align-items: center;
  margin-top: 77px;
  font-size: 42px;
  line-height: 52px;
}
.location svg {
  margin: 0 8px 0 14px;
}
.away {
  color: #666;
  font-size: 33px;
}
.description {
  margin: 47px 0 0;
  font-size: 47px;
  line-height: 66px;
}
.elevationHead {
  display: flex;
  justify-content: space-between;
  align-items: baseline;
  margin-top: 94px;
  padding: 0 60px 0 48px;
}
.elevationHead h2 {
  margin: 0;
  color: #666;
  font-size: 59px;
  line-height: 72px;
  font-weight: 500;
}
.elevationHead a {
  color: #0074bd;
  font-size: 36px;
  font-weight: 500;
  text-decoration: none;
}
.card {
  margin-top: 52px;
  padding-top: 30px;
  box-shadow: 0 0 2px #eee;
}
.chart {
  display: block;
  width: 100%;
  padding: 0 48px;
}
.gridLines {
  fill: none;
  stroke: #666;
  stroke-width: 3px;
  stroke-dasharray: 9 9;
}
.shaded {
  stroke: #000;
  stroke-opacity: 0.27;
}
.profile {
  fill: none;
  stroke: #1a1d1f;
  stroke-width: 3px;
  stroke-linejoin: round;
}
.axis text {
  font-size: 33px;
  fill: #666;
}
.gradientRow {
  display: flex;
  align-items: center;
  gap: 60px;
  margin-top: 129px;
  padding: 25px 48px;
  border-top: 2px solid #ddd;
  font-size: 42px;
  line-height: 52px;
}
.label {
  flex: 1;
}
.value {
  display: flex;
  align-items: center;
  gap: 14px;
  color: #666;
  font-size: 39px;
}
.selectBtn {
  position: absolute;
  left: 48px;
  right: 48px;
  bottom: 48px;
  height: 132px;
  border-radius: 66px;
  background: #1a1d1f;
  color: #fff;
  font-size: 48px;
  font-weight: 500;
}

.tabBar {
  display: grid;
  grid-template-columns: repeat(5, 1fr);
  padding: 7px 30px 0;
  border-top: 2px solid #c4c4c8;
  flex-shrink: 0;
}
.tab {
  display: flex;
  flex-direction: column;
  align-items: center;
  gap: 11px;
  color: #4a4a4a;
  font-size: 33px;
  line-height: 42px;
  text-decoration: none;
}
.tabIcon {
  display: flex;
  justify-content: center;
  align-items: center;
  width: 120px;
  height: 120px;
  border-radius: 50%;
}
.active {
  color: #007ac2;
  font-weight: 700;
}
.active .tabIcon {
  background: #d5e9f4;
}
.homeBar {
  display: flex;
  justify-content: center;
  padding: 61px 0 24px;
  flex-shrink: 0;
}
.homeBar span {
  width: 444px;
  height: 15px;
  border-radius: 8px;
  background: #000;
}
```
